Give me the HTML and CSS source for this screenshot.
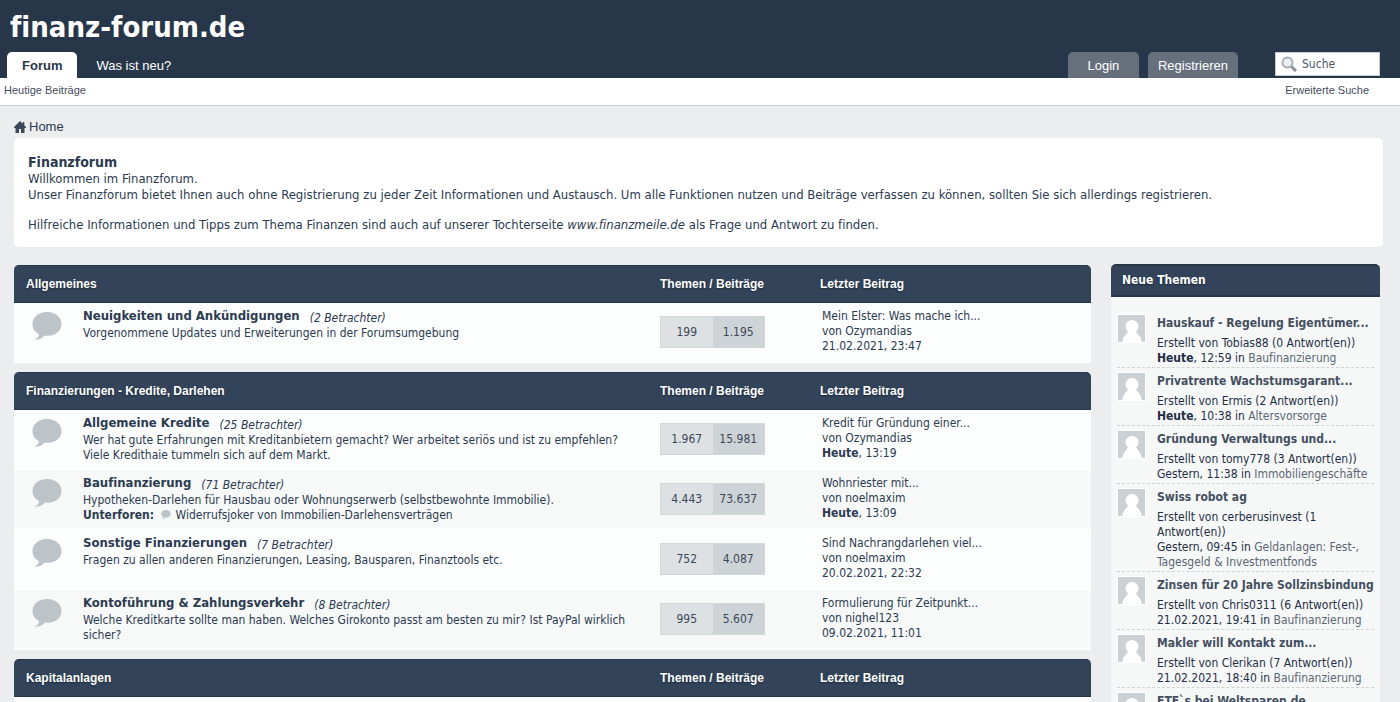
FILE: index.html
```html
<!DOCTYPE html>
<html lang="de">
<head>
<meta charset="utf-8">
<title>Finanzforum</title>
<link rel="stylesheet" href="styles.css">
</head>
<body>
<svg width="0" height="0" class="defs" aria-hidden="true">
  <symbol id="bubble" viewBox="0 0 30 28"><path d="M15 0C6.500 0 .5 5 .5 12c0 4.500 2.500 8 6.500 10.200.3 2-1.500 4-4.500 5.300 4.500.6 8-.8 10-4 10 1.500 17-4 17-11.500C29.500 5 23.500 0 15 0z"/></symbol>
  <symbol id="avatar" viewBox="0 0 26 26"><path d="M0 0h26v26H0z" fill="#cbd0d5"/><circle cx="13.500" cy="11" r="6.300" fill="#fff"/><path d="M4 26c1-5 4-8 6-10h7c2 2 5 5 6 10z" fill="#fff"/></symbol>
</svg>
<header class="top">
  <a class="logo" href="#">finanz-forum.de</a>
  <div class="bar">
    <nav class="tabs">
      <a class="tab active" href="#">Forum</a>
      <a class="tab" href="#">Was ist neu?</a>
    </nav>
    <div class="account">
      <button class="account-btn" type="button">Login</button>
      <button class="account-btn" type="button">Registrieren</button>
    </div>
    <form class="search">
      <svg class="lens" viewBox="0 0 16 16" aria-hidden="true"><path d="M10 10l5 5" stroke="#8a929b" stroke-width="3"/><circle cx="6.500" cy="6.500" r="5" fill="#eceff1" stroke="#a5acb4" stroke-width="1.800"/></svg>
      <input class="search-input" type="text" placeholder="Suche" aria-label="Suche">
    </form>
  </div>
</header>
<div class="subnav"><a href="#">Heutige Beiträge</a><a href="#">Erweiterte Suche</a></div>
<main class="page">
  <nav class="crumbs"><svg class="home" viewBox="0 0 12 12" aria-hidden="true"><path d="M6 0L0 6v1h1.500v5H5V8h2v4h3.500V7H12V6l-1.700-1.700V1H8.700v1.700z"/></svg><a href="#">Home</a></nav>
  <section class="welcome">
    <h1>Finanzforum</h1>
    <p>Willkommen im Finanzforum.<br>Unser Finanzforum bietet Ihnen auch ohne Registrierung zu jeder Zeit Informationen und Austausch. Um alle Funktionen nutzen und Beiträge verfassen zu können, sollten Sie sich allerdings <a href="#">registrieren.</a></p>
    <p>Hilfreiche Informationen und Tipps zum Thema Finanzen sind auch auf unserer Tochterseite <a href="#"><i>www.finanzmeile.de</i></a> als Frage und Antwort zu finden.</p>
  </section>
  <div class="columns">
    <div class="forums">
      <table class="category">
        <colgroup><col class="c-icon"><col><col class="c-stats"><col class="c-last"></colgroup>
        <thead><tr><th colspan="2">Allgemeines</th><th>Themen / Beiträge</th><th>Letzter Beitrag</th></tr></thead>
        <tbody>
          <tr><td class="icon"><svg class="bubble"><use href="#bubble"/></svg></td><td><h2><a href="#">Neuigkeiten und Ankündigungen</a> <i>(2 Betrachter)</i></h2><p>Vorgenommene Updates und Erweiterungen in der Forumsumgebung</p></td><td><div class="counts"><span>199</span><span>1.195</span></div></td><td class="last"><a href="#">Mein Elster: Was mache ich...</a><br>von <a href="#">Ozymandias</a><br>21.02.2021, 23:47</td></tr>
        </tbody>
      </table>
      <table class="category">
        <colgroup><col class="c-icon"><col><col class="c-stats"><col class="c-last"></colgroup>
        <thead><tr><th colspan="2">Finanzierungen - Kredite, Darlehen</th><th>Themen / Beiträge</th><th>Letzter Beitrag</th></tr></thead>
        <tbody>
          <tr><td class="icon"><svg class="bubble"><use href="#bubble"/></svg></td><td><h2><a href="#">Allgemeine Kredite</a> <i>(25 Betrachter)</i></h2><p>Wer hat gute Erfahrungen mit Kreditanbietern gemacht? Wer arbeitet seriös und ist zu empfehlen? Viele Kredithaie tummeln sich auf dem Markt.</p></td><td><div class="counts"><span>1.967</span><span>15.981</span></div></td><td class="last"><a href="#">Kredit für Gründung einer...</a><br>von <a href="#">Ozymandias</a><br><b>Heute</b>, 13:19</td></tr>
          <tr><td class="icon"><svg class="bubble"><use href="#bubble"/></svg></td><td><h2><a href="#">Baufinanzierung</a> <i>(71 Betrachter)</i></h2><p>Hypotheken-Darlehen für Hausbau oder Wohnungserwerb (selbstbewohnte Immobilie).</p><p><b>Unterforen:</b> <svg class="mini"><use href="#bubble"/></svg><a href="#">Widerrufsjoker von Immobilien-Darlehensverträgen</a></p></td><td><div class="counts"><span>4.443</span><span>73.637</span></div></td><td class="last"><a href="#">Wohnriester mit...</a><br>von <a href="#">noelmaxim</a><br><b>Heute</b>, 13:09</td></tr>
          <tr><td class="icon"><svg class="bubble"><use href="#bubble"/></svg></td><td><h2><a href="#">Sonstige Finanzierungen</a> <i>(7 Betrachter)</i></h2><p>Fragen zu allen anderen Finanzierungen, Leasing, Bausparen, Finanztools etc.</p></td><td><div class="counts"><span>752</span><span>4.087</span></div></td><td class="last"><a href="#">Sind Nachrangdarlehen viel...</a><br>von <a href="#">noelmaxim</a><br>20.02.2021, 22:32</td></tr>
          <tr><td class="icon"><svg class="bubble"><use href="#bubble"/></svg></td><td><h2><a href="#">Kontoführung &amp; Zahlungsverkehr</a> <i>(8 Betrachter)</i></h2><p>Welche Kreditkarte sollte man haben. Welches Girokonto passt am besten zu mir? Ist PayPal wirklich sicher?</p></td><td><div class="counts"><span>995</span><span>5.607</span></div></td><td class="last"><a href="#">Formulierung für Zeitpunkt...</a><br>von <a href="#">nighel123</a><br>09.02.2021, 11:01</td></tr>
        </tbody>
      </table>
      <table class="category">
        <colgroup><col class="c-icon"><col><col class="c-stats"><col class="c-last"></colgroup>
        <thead><tr><th colspan="2">Kapitalanlagen</th><th>Themen / Beiträge</th><th>Letzter Beitrag</th></tr></thead>
        <tbody><tr><td class="icon"></td><td></td><td></td><td></td></tr></tbody>
      </table>
    </div>
    <aside class="side">
      <h2 class="side-head">Neue Themen</h2>
      <ul class="topics">
        <li><svg class="avatar"><use href="#avatar"/></svg><div><h3><a href="#">Hauskauf - Regelung Eigentümer...</a></h3><p>Erstellt von Tobias88 (0 Antwort(en))<br><b>Heute</b>, 12:59 in <a href="#">Baufinanzierung</a></p></div></li>
        <li><svg class="avatar"><use href="#avatar"/></svg><div><h3><a href="#">Privatrente Wachstumsgarant...</a></h3><p>Erstellt von Ermis (2 Antwort(en))<br><b>Heute</b>, 10:38 in <a href="#">Altersvorsorge</a></p></div></li>
        <li><svg class="avatar"><use href="#avatar"/></svg><div><h3><a href="#">Gründung Verwaltungs und...</a></h3><p>Erstellt von tomy778 (3 Antwort(en))<br>Gestern, 11:38 in <a href="#">Immobiliengeschäfte</a></p></div></li>
        <li><svg class="avatar"><use href="#avatar"/></svg><div><h3><a href="#">Swiss robot ag</a></h3><p>Erstellt von cerberusinvest (1 Antwort(en))<br>Gestern, 09:45 in <a href="#">Geldanlagen: Fest-, Tagesgeld &amp; Investmentfonds</a></p></div></li>
        <li><svg class="avatar"><use href="#avatar"/></svg><div><h3><a href="#">Zinsen für 20 Jahre Sollzinsbindung</a></h3><p>Erstellt von Chris0311 (6 Antwort(en))<br>21.02.2021, 19:41 in <a href="#">Baufinanzierung</a></p></div></li>
        <li><svg class="avatar"><use href="#avatar"/></svg><div><h3><a href="#">Makler will Kontakt zum...</a></h3><p>Erstellt von Clerikan (7 Antwort(en))<br>21.02.2021, 18:40 in <a href="#">Baufinanzierung</a></p></div></li>
        <li><svg class="avatar"><use href="#avatar"/></svg><div><h3><a href="#">ETF`s bei Weltsparen.de</a></h3></div></li>
      </ul>
    </aside>
  </div>
</main>
</body>
</html>
```
FILE: styles.css
```css
* { box-sizing: border-box; }
html { overflow: hidden; height: 100%; }
body {
  margin: 0;
  height: 100%;
  overflow: hidden;
  background: #ebedef;
  color: #2b3b50;
  font: 12px/15px Tahoma, "DejaVu Sans Condensed", "Noto Sans", sans-serif;
  font-variant-ligatures: none;
}
a { color: inherit; text-decoration: none; }
h1, h2, h3, p, ul { margin: 0; padding: 0; }
.defs { position: absolute; }

.top { background: #273749; padding: 10px 20px 0 7px; }
.logo {
  display: block;
  height: 42px;
  padding-left: 3px;
  color: #fff;
  font: bold 29px/34px "DejaVu Sans Condensed", "Noto Sans", sans-serif;
  font-variant-ligatures: none;
}
.bar { display: flex; height: 26px; font-family: "Liberation Sans", Arial, sans-serif; }
.tabs { display: flex; flex: 1; gap: 4px; }
.tab { padding: 0 15px; color: #fff; font-size: 13px; line-height: 28px; }
.tab.active { background: #fff; color: #273749; font-weight: bold; border-radius: 5px 5px 0 0; }
.account { display: flex; gap: 9px; margin-right: 37px; }
.account-btn {
  min-width: 71px;
  padding: 2px 10px 0;
  border: 0;
  border-radius: 5px 5px 0 0;
  background: #66707c;
  color: #fff;
  font: 13px/24px "Liberation Sans", Arial, sans-serif;
}
.search { display: flex; align-items: center; width: 105px; height: 24px; padding-left: 5px; gap: 5px; background: #fff; border: 1px solid #c4cad0; }
.lens { flex: none; width: 16px; height: 16px; }
.search-input { width: 100%; min-width: 0; padding: 0; border: 0; outline: 0; background: none; color: #4d5866; font: 12px/20px Tahoma, "DejaVu Sans Condensed", sans-serif; }
.search-input::placeholder { color: #4d5866; opacity: 1; }
.subnav {
  display: flex;
  justify-content: space-between;
  height: 28px;
  padding: 0 31px 0 4px;
  background: #fff;
  border-bottom: 1px solid #c8ccd1;
  color: #3f4c5c;
  font: 11px/25px "Liberation Sans", Arial, sans-serif;
}

.page { padding: 10px 17px 0 14px; }
.crumbs { display: flex; align-items: center; gap: 3px; height: 22px; font: 13px/20px "Liberation Sans", Arial, sans-serif; }
.home { width: 12px; height: 12px; fill: #3a485a; }
.welcome { padding: 16px 14px 14px; background: #fff; border-radius: 5px; font-size: 13px; }
.welcome h1 { font-size: 14px; line-height: 17px; }
.welcome p { line-height: 16px; }
.welcome p + p { margin-top: 14px; }

.columns { display: flex; align-items: flex-start; gap: 20px; margin-top: 17px; }
.forums { flex: 1; min-width: 0; padding-top: 1px; }
.category { width: 100%; table-layout: fixed; border-collapse: separate; border-spacing: 0; margin-bottom: 9px; }
.category th {
  height: 38px;
  padding: 0;
  background: #33445a;
  border-top: 1px solid #273749;
  border-bottom: 1px solid #273749;
  color: #fff;
  font: bold 12px/15px "Liberation Sans", Arial, sans-serif;
  text-align: left;
  text-shadow: 0 1px 2px #1b2735;
}
.category th:first-child { border-top-left-radius: 5px; padding-left: 12px; }
.category th:last-child { border-top-right-radius: 5px; }
.c-icon { width: 69px; }
.c-stats { width: 160px; }
.c-last { width: 271px; }
.category td { height: 60px; padding: 6px 0 0; vertical-align: top; background: #fcfdfd; border-bottom: 2px solid #fff; }
.category tr:nth-child(even) td { background: #f7f9f9; }
.category td:nth-child(2) { padding: 5px 24px 0 0; }
.category td.icon { padding: 9px 0 0 18px; }
.bubble { display: block; width: 30px; height: 28px; fill: #bcc3c9; }
.mini { width: 12px; height: 9px; margin: 0 3px; fill: #bcc3c9; }
.category h2 { display: flex; gap: 10px; font-size: 13px; line-height: 16px; }
.category h2 i { padding-top: 3px; font-size: 12px; font-weight: normal; line-height: 15px; }
.counts { display: flex; width: 105px; height: 32px; margin-top: 7px; border: 1px solid #d3d7da; line-height: 30px; text-align: center; color: #3a485a; }
.counts span { flex: 1; background: #dee1e4; }
.counts span + span { background: #ced3d7; }
.category td.last { padding-left: 2px; }

.side { width: 269px; margin-right: 3px; background: #f6f8f8; border-radius: 5px 5px 0 0; }
.side-head {
  height: 33px;
  padding-left: 11px;
  border-top: 2px solid #273749;
  border-bottom: 2px solid #273749;
  border-radius: 5px 5px 0 0;
  background: #33445a;
  color: #fff;
  font-size: 12px;
  line-height: 29px;
  text-shadow: 0 1px 2px #1b2735;
}
.topics { list-style: none; padding: 13px 6px 0; }
.topics li { display: flex; gap: 11px; padding: 4px 0 1px; border-bottom: 1px dashed #cfd3d6; }
.topics li div { flex: 1; min-width: 0; }
.topics p { color: #1f2f45; }
.topics p a { color: #5b6673; }
.topics h3 { height: 22px; font-size: 12px; line-height: 19px; white-space: nowrap; color: #434f60; }
.avatar { flex: none; width: 29px; height: 29px; padding: 1px; background: #fff; }
```
